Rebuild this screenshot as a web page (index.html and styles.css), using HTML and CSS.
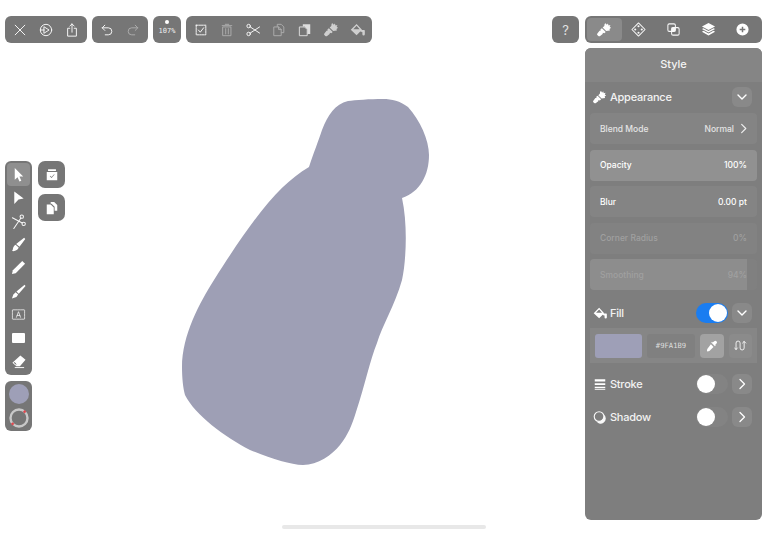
FILE: index.html
```html
<!DOCTYPE html>
<html lang="en">
<head>
<meta charset="utf-8">
<title>Vector editor</title>
<link rel="stylesheet" href="styles.css">
</head>
<body>
<svg width="0" height="0" class="defs">
  <defs>
    <symbol id="brush" viewBox="0 0 16 16">
      <path fill="currentColor" d="M9.200 1.200 10.400 3l1.200-1.500.7 2.300 2-.6-.8 2.200 1.600.7-1.800 1.300.5 1.600L9.800 9.700 6 5.900 7.800 4.200l.3-2.200zM5.300 6.600l4 4-1.500 1.300-1.500-.5-.3 1.500-3 2.200a1.500 1.500 0 0 1-1.600-.2l-1-1a1.400 1.400 0 0 1 0-1.700l2.300-3 1.300-.2-.3-1.400z"/>
    </symbol>
    <symbol id="bucket" viewBox="0 0 16 16">
      <path fill="currentColor" d="M7 2 .8 8.200 7 14l5.800-5.800zM7 4 10.300 7.600H3.500z"/>
      <path fill="currentColor" d="M10 8.500h4.800c.7 0 1 .5 1 1V13a1.300 1.300 0 0 1-2.600 0v-2c0-.6-1-.8-1.300-.2z"/>
    </symbol>
    <symbol id="chev-down" viewBox="0 0 12 12">
      <path d="M2 4l4 4 4-4" fill="none" stroke="currentColor" stroke-width="1.400" stroke-linecap="round" stroke-linejoin="round"/>
    </symbol>
    <symbol id="chev-right" viewBox="0 0 12 12">
      <path d="M4 1.500 8.500 6 4 10.500" fill="none" stroke="currentColor" stroke-width="1.300" stroke-linecap="round" stroke-linejoin="round"/>
    </symbol>
  </defs>
</svg>

<div class="app">
  <svg class="canvas" width="768" height="533" viewBox="0 0 768 533">
    <path class="blob" d="M309 167C280 184 255 215 214 280C200 302 182 335 182 367C182 378 183 388 185 395C195 415 225 437 250 450C270 458 290 465 303 465C318 465 332 455 340 445C348 435 352 425 356 412C365 385 370 360 377 343C382 326 395 305 402 280C406 262 408 225 402 198C420 192 429 175 429 155C429 140 420 120 408 107C400 101 392 99 383 99C370 99 355 100 348 101C335 104 328 115 322 130C318 142 314 152 309 167Z"/>
  </svg>

  <header class="topbar">
    <div class="group">
      <button class="tb"><svg viewBox="0 0 16 16" class="ic"><path d="M2.500 2.500l11 11M13.500 2.500l-11 11"/></svg></button>
      <button class="tb"><svg viewBox="0 0 16 16" class="ic"><circle cx="8" cy="8" r="6.500"/><path d="M6 4.500 11.500 8 6 11.500zM1.500 8H6"/></svg></button>
      <button class="tb"><svg viewBox="0 0 16 16" class="ic"><path d="M5.500 6H3v9h10V6h-2.500M8 10.500V1M5.500 3.500 8 1l2.500 2.500"/></svg></button>
    </div>
    <div class="group">
      <button class="tb"><svg viewBox="0 0 16 16" class="ic"><path d="M5.500 2.500 2.500 5.500l3 3M2.500 5.500h7a3.500 3.500 0 0 1 0 8H6"/></svg></button>
      <button class="tb off"><svg viewBox="0 0 16 16" class="ic"><path d="M10.500 2.500l3 3-3 3M13.500 5.500h-7a3.500 3.500 0 0 0 0 8H10"/></svg></button>
    </div>
    <div class="group zoom">
      <span class="zoom-dot"></span>
      <span class="zoom-val">107%</span>
    </div>
    <div class="group">
      <button class="tb"><svg viewBox="0 0 16 16" class="ic"><rect x="2.500" y="2.500" width="11" height="11" stroke-dasharray="2 1"/><path d="M5 8l2.200 2.500L11 5.500"/></svg></button>
      <button class="tb off"><svg viewBox="0 0 16 16" class="ic"><path d="M3.500 4.500h9v10h-9zM2.500 3h11M6 1.500h4M6.500 6.500v6M9.500 6.500v6"/></svg></button>
      <button class="tb"><svg viewBox="0 0 16 16" class="ic wide"><circle cx="3" cy="3.500" r="2"/><circle cx="3" cy="12.500" r="2"/><path d="M4.800 4.500 15.500 11.500M4.800 11.500 15.500 4.500"/></svg></button>
      <button class="tb off"><svg viewBox="0 0 16 16" class="ic"><path d="M6 4V1.500h4.500L13.500 4.500V11H11M2.500 4.500h5l3 3v7h-8zM7.500 4.500v3h3"/></svg></button>
      <button class="tb soft"><svg viewBox="0 0 16 16" class="ic"><path class="solid" d="M5.500 1.500h8.500v11h-3.500V7L7.500 4H5.500z"/><path class="cut" d="M2 4.500h5.500l3 3v7H2z"/></svg></button>
      <button class="tb dim"><svg class="ic-fill"><use href="#brush"/></svg></button>
      <button class="tb dim"><svg class="ic-fill"><use href="#bucket"/></svg></button>
    </div>
    <div class="spacer"></div>
    <div class="group help">?</div>
    <nav class="group tabs">
      <button class="tab active"><svg class="ic-fill"><use href="#brush"/></svg></button>
      <button class="tab"><svg viewBox="0 0 16 16" class="ic"><path d="M8 1 15 8 8 15 1 8z"/><circle cx="8" cy="4.500" r=".6"/><circle cx="4.500" cy="8" r=".6"/><circle cx="11.500" cy="8" r=".6"/><circle cx="8" cy="11.500" r=".6"/></svg></button>
      <button class="tab"><svg viewBox="0 0 16 16" class="ic"><rect x="2" y="2" width="8" height="8" rx="1.500"/><rect x="6" y="6" width="8" height="8" rx="1.500"/><rect class="solid" x="6" y="6" width="4" height="4"/></svg></button>
      <button class="tab"><svg viewBox="0 0 16 16" class="ic-solid"><path d="M8 1 15 4.800 8 8.600 1 4.800z"/><path d="M1 7.500 2.700 6.600 8 9.600l5.300-3L15 7.500 8 11.300zM1 10.300l1.700-.9L8 12.300l5.300-2.900 1.700.9L8 14.500z"/></svg></button>
      <button class="tab"><svg viewBox="0 0 16 16" class="ic-solid"><path d="M8 1.500a6.500 6.500 0 1 1 0 13 6.500 6.500 0 0 1 0-13zM7.200 5v2.200H5v1.600h2.200V11h1.600V8.800H11V7.200H8.800V5z" fill-rule="evenodd"/></svg></button>
    </nav>
  </header>

  <main class="stage">
    <div class="dock">
      <div class="dock-col">
        <div class="group tools">
          <button class="tool active"><svg viewBox="0 0 16 16" class="ic-solid"><path d="M4 1v12.500l3-2.700 2 4.700 2-.9-2-4.600h4z"/></svg></button>
          <button class="tool"><svg viewBox="0 0 16 16" class="ic-solid"><path d="M3.500 1.500 13.500 9 8 10 3.500 15z"/></svg></button>
          <button class="tool"><svg viewBox="0 0 16 16" class="ic"><circle cx="11.500" cy="2.800" r="1.800"/><circle cx="13.500" cy="10.500" r="1.800"/><path d="M10.600 4.300 3 15.500M12 9.600 1.500 4"/></svg></button>
          <button class="tool"><svg viewBox="0 0 16 16" class="ic-solid"><path d="M14 .8 15.200 2 9 10.500 5.500 7.500zM4.800 8.200 8.200 11.300C7.500 14 4.500 15.500 1 15c1.300-1.500.8-2.700 1.500-4.200.5-1.100 1.300-2 2.300-2.600z"/></svg></button>
          <button class="tool"><svg viewBox="0 0 16 16" class="ic-solid"><path d="M12 1l3 3-10 10L1 15l1-4z"/></svg></button>
          <button class="tool"><svg viewBox="0 0 16 16" class="ic-solid"><path d="M14.500 .8 15.500 2 8.300 10.300 5.800 8zM5 8.800 7.600 11.200 5.800 13.800 1 15.500l1.500-4.300z"/></svg></button>
          <button class="tool"><svg viewBox="0 0 16 16" class="ic thin"><rect x="1.500" y="3" width="13" height="10" rx=".5" stroke-dasharray="2 .8"/><path d="M5.800 11 8 5l2.200 6M6.600 9h2.800"/></svg></button>
          <button class="tool"><span class="rect-tool"></span></button>
          <button class="tool"><svg viewBox="0 0 16 16" class="ic-solid"><path d="M10 1.500 15.500 6 9.500 13H5.800L1.500 9.200zM5.200 9.800 3.500 8.600 2.900 9.200 6 12z" fill-rule="evenodd"/><path d="M4 14h10v1H4z"/></svg></button>
        </div>
        <div class="group colors">
          <span class="color-dot"></span>
          <svg class="ring" viewBox="0 0 20 20"><circle cx="10" cy="10" r="8.500" class="ring-base"/><path class="ring-mark" d="M14.800 2.800l1.700 1.700M2.800 15l1.700 1.700"/></svg>
        </div>
      </div>
      <div class="dock-col side">
        <button class="group mini"><svg viewBox="0 0 16 16" class="ic-solid"><path d="M3.500 1.500h9v2h-9zM2 4.500h12V14H2zM5.500 9.500l2 2 3.500-4-.6-.5L7.500 10.300 6 8.900z" fill-rule="evenodd"/></svg></button>
        <button class="group mini"><svg viewBox="0 0 16 16" class="ic-solid"><path d="M6.500 1h4l3.500 3.500V11H11V6.500L7.500 3H6.500zM2 4h4.500l3.500 3.500V15H2z"/></svg></button>
      </div>
    </div>

    <aside class="panel">
      <h1 class="panel-title">Style</h1>
      <div class="section-head head-main">
        <svg class="sec-ic"><use href="#brush"/></svg>
        <span class="sec-name">Appearance</span>
        <button class="square"><svg class="chev"><use href="#chev-down"/></svg></button>
      </div>
      <div class="rows">
        <div class="row"><span>Blend Mode</span><span class="val">Normal<svg class="row-chev"><use href="#chev-right"/></svg></span></div>
        <div class="row lit"><span>Opacity</span><span class="val">100%</span></div>
        <div class="row bright"><span>Blur</span><span class="val">0.00 pt</span></div>
        <div class="row disabled"><span>Corner Radius</span><span class="val">0%</span></div>
        <div class="row disabled slider"><span class="slider-fill" style="width:94%"></span><span class="row-text">Smoothing</span><span class="val row-text">94%</span></div>
      </div>

      <div class="section-head head-fill">
        <svg class="sec-ic"><use href="#bucket"/></svg>
        <span class="sec-name">Fill</span>
        <span class="toggle on"><span class="thumb"></span></span>
        <button class="square"><svg class="chev"><use href="#chev-down"/></svg></button>
      </div>
      <div class="fill-tools">
        <span class="swatch"></span>
        <span class="hex">#9FA1B9</span>
        <button class="pick"><svg viewBox="0 0 16 16" class="ic-solid"><path d="M11 1.800a2 2 0 0 1 3 3l-1.800 1.800.8.800-1 1-5-5 1-1 .8.800zM6.500 5.800l3.500 3.500-5.500 5.500-2.500.5-.8-.8.500-2.500z"/></svg></button>
        <button class="swap"><svg viewBox="0 0 16 16" class="ic"><path d="M2.500 13V5a2.500 2.500 0 0 1 5 0v6a2.500 2.500 0 0 0 5 0V3M10.500 5l2-2 2 2M.8 11l1.700 2 1.700-2"/></svg></button>
      </div>

      <div class="section-head head-stroke">
        <svg viewBox="0 0 16 16" class="sec-ic ic-solid"><path d="M2 2.500h12v2.500H2zM2 7h12v2H2zM2 11h12v1.500H2zM2 13.500h12V14.500H2z"/></svg>
        <span class="sec-name">Stroke</span>
        <span class="toggle"><span class="thumb"></span></span>
        <button class="square"><svg class="chev"><use href="#chev-right"/></svg></button>
      </div>
      <div class="section-head head-shadow">
        <svg viewBox="0 0 16 16" class="sec-ic ic shadow-ic"><circle cx="6.500" cy="7" r="5.200"/><path class="solid" d="M11.500 4.800a5.300 5.300 0 0 1-.3 8.700A5 5 0 0 1 4 12.500c4 .8 8-3 7.500-7.700z"/></svg>
        <span class="sec-name">Shadow</span>
        <span class="toggle"><span class="thumb"></span></span>
        <button class="square"><svg class="chev"><use href="#chev-right"/></svg></button>
      </div>
    </aside>
  </main>

  <div class="home-bar"></div>
</div>
</body>
</html>
```
FILE: styles.css
```css
* { box-sizing: border-box; }
html, body { margin: 0; padding: 0; background: #fff; }
body { font-family: Inter, "Liberation Sans", sans-serif; color: #fff; }
button { border: 0; margin: 0; padding: 0; background: none; color: inherit; font: inherit; display: flex; align-items: center; justify-content: center; }
.defs { position: absolute; }
.app { position: relative; width: 768px; height: 533px; overflow: hidden; background: #fff; }
.canvas { position: absolute; left: 0; top: 0; }
.blob { fill: #9e9fb5; }

.topbar { position: relative; display: flex; gap: 5px; padding: 16px 6px 0 5px; height: 43px; }
.spacer { flex: 1; }
.group { display: flex; padding: 2px; border-radius: 6px; background: #767676; }
.tb { width: 26px; height: 23px; }
.tb.off { opacity: .42; }
.tb.dim { opacity: .65; }
.tb.soft { opacity: .8; }

.ic { width: 14px; height: 14px; fill: none; stroke: #fff; stroke-width: 1.100; stroke-linecap: round; stroke-linejoin: round; opacity: .95; }
.ic.wide { width: 16px; }
.ic.thin { stroke-width: .8; }
.ic .solid, .solid { fill: #fff; stroke: none; }
.ic .cut { fill: #767676; }
.ic-fill { width: 15px; height: 15px; color: #fff; }
.ic-solid { width: 14px; height: 14px; fill: #fff; }

.zoom { position: relative; width: 28px; flex-direction: column; align-items: center; padding: 4px 0 0; }
.zoom-dot { width: 4px; height: 4px; border-radius: 50%; background: #fff; }
.zoom-val { font: 7px/1 "DejaVu Sans Mono", monospace; margin-top: 4px; color: #eee; }

.help { width: 27px; align-items: center; justify-content: center; font-size: 13px; color: #e2e2e2; margin-right: 1px; }
.tabs { width: 177px; }
.tab { flex: 1; height: 23px; border-radius: 4px; }
.tab .ic, .tab .ic-solid { width: 15px; height: 15px; }
.tab.active { background: #8a8a8a; }

.stage { position: relative; display: flex; justify-content: space-between; padding: 5px 6px 0 5px; }
.dock { display: flex; gap: 6px; margin-top: 113px; align-items: flex-start; }
.dock-col { display: flex; flex-direction: column; gap: 6px; width: 27px; }
.tools { flex-direction: column; }
.tool { width: 23px; height: 23.300px; border-radius: 4px; }
.tool.active { background: #8f8f8f; }
.tool .ic-solid, .tool .ic { width: 15px; height: 15px; }
.rect-tool { width: 13px; height: 10px; background: #fff; border-radius: 1px; }
.colors { flex-direction: column; align-items: center; gap: 4px; padding: 3px 0; height: 50px; }
.color-dot { width: 20px; height: 20px; border-radius: 50%; background: #9e9fb7; }
.ring { width: 20px; height: 20px; fill: none; }
.ring-base { stroke: #c8c8c8; stroke-width: 2.400; }
.ring-mark { stroke: #e0484f; stroke-width: 2.400; }
.mini { width: 27px; height: 27px; align-items: center; justify-content: center; border-radius: 7px; }

.panel { width: 177px; height: 472px; border-radius: 6px; background: #7e7e7e; overflow: hidden; }
.panel-title { margin: 0; height: 34px; font-size: 11px; line-height: 33px; font-weight: 500; text-align: center; background: #858585; color: #f4f4f4; }
.section-head { display: flex; align-items: center; height: 20px; padding: 0 10px 0 8px; font-size: 11px; font-weight: 500; }
.head-main { margin-top: 5px; margin-bottom: 6px; }
.head-fill { margin-top: 13px; }
.head-stroke { margin-top: 11px; }
.head-shadow { margin-top: 13px; }
.sec-ic { width: 14px; height: 14px; flex: none; margin-right: 3px; color: #fff; }
.shadow-ic { stroke-width: 1.200; width: 15px; height: 15px; margin-right: 2px; }
.sec-name { flex: 1; color: #f2f2f2; letter-spacing: -.25px; }
.square { width: 20px; height: 20px; border-radius: 6px; background: #898989; }
.chev { width: 12px; height: 12px; }
.toggle { position: relative; display: block; width: 32px; height: 20px; border-radius: 10px; background: #838383; margin-right: 4px; }
.toggle.on { background: #1a7df1; }
.thumb { position: absolute; left: 1px; top: 1px; width: 18px; height: 18px; border-radius: 50%; background: #fff; }
.toggle.on .thumb { left: 13px; }

.rows { display: flex; flex-direction: column; gap: 5.500px; padding: 0 5px; }
.row { position: relative; display: flex; justify-content: space-between; align-items: center; height: 31px; padding: 0 10px; border-radius: 4px; background: #848484; font-size: 8.500px; font-weight: 500; color: #e4e4e4; }
.row.lit { background: #919191; color: #fff; }
.row.bright { color: #fff; }
.row.disabled { background: #828282; color: #a0a0a0; }
.row.slider { background: #808080; }
.slider-fill { position: absolute; left: 0; top: 0; bottom: 0; background: #8d8d8d; border-radius: 4px 0 0 4px; }
.row-text { position: relative; }
.val { display: flex; align-items: center; }
.row-chev { width: 11px; height: 11px; margin-left: 4px; margin-right: -2px; color: #eee; }

.fill-tools { display: flex; align-items: center; gap: 5px; height: 35px; margin: 5px 5px 0; padding: 0 5px; background: #868686; }
.swatch { width: 47px; height: 24px; border-radius: 3px; background: #9e9fb7; }
.hex { width: 48px; height: 24px; border-radius: 3px; background: #808080; font: 7.200px/24px "DejaVu Sans Mono", monospace; text-align: center; color: #ddd; }
.pick { width: 24px; height: 24px; border-radius: 4px; background: #a2a2a2; }
.pick .ic-solid { width: 12px; height: 12px; }
.swap { width: 23px; height: 24px; border-radius: 4px; background: #8b8b8b; }
.swap .ic { width: 13px; height: 13px; }

.home-bar { position: absolute; left: 282px; top: 525px; width: 204px; height: 4px; border-radius: 2px; background: #e8e8e8; }
```
